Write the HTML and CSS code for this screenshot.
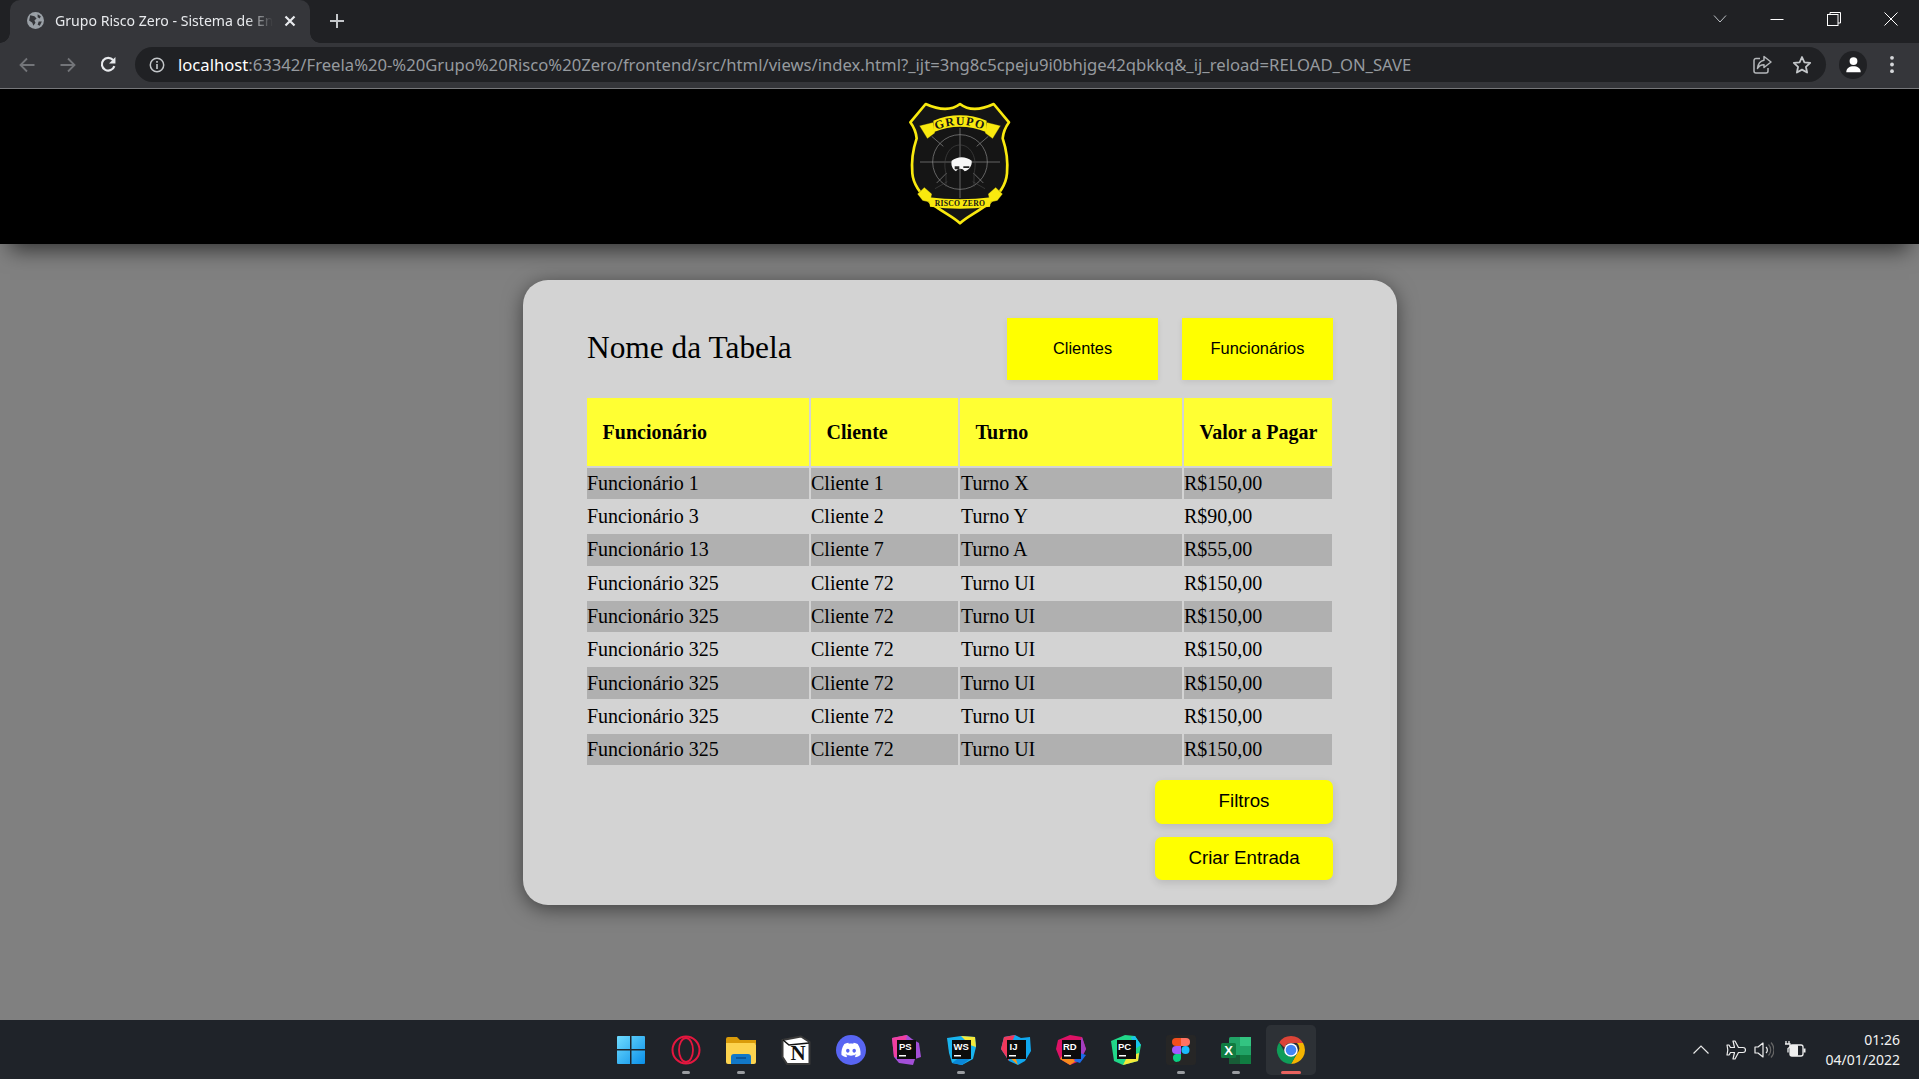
FILE: index.html
```html
<!DOCTYPE html>
<html lang="pt-BR">
<head>
<meta charset="utf-8">
<title>Grupo Risco Zero - Sistema de Entradas</title>
<link rel="stylesheet" href="styles.css">
</head>
<body>
<div class="tabstrip">
  <div class="tab">
    <svg class="favicon" viewBox="0 0 16 16"><circle cx="8" cy="8" r="8" fill="#9aa0a6"/><path d="M3 3l4 1 2 2-2 2 1 2-2 3-1-3-3-2zM10 2l3 2-1 2-2-1zM11 9l3 0-2 4-2-1z" fill="#35363a"/></svg>
    <span class="tab-title">Grupo Risco Zero - Sistema de En</span>
    <svg class="tab-close" viewBox="0 0 12 12"><path d="M1.500 1.500l9 9M10.500 1.500l-9 9" stroke="#e8eaed" stroke-width="2.200"/></svg>
  </div>
  <svg class="new-tab" viewBox="0 0 16 16"><path d="M8 1v14M1 8h14" stroke="#c4c7ca" stroke-width="2"/></svg>
  <div class="win-controls">
    <svg class="win-chevron" viewBox="0 0 14 10"><path d="M1 1.500l6 6.500 6-6.500" fill="none" stroke="#bdc1c6" stroke-width="1"/></svg>
    <svg class="win-btn" viewBox="0 0 14 14"><path d="M0.500 7.500h13" stroke="#fff" stroke-width="1"/></svg>
    <svg class="win-btn" viewBox="0 0 14 14"><rect x="0.500" y="2.500" width="10.500" height="11" fill="none" stroke="#fff"/><path d="M3 2.500V0.500h10.500v10.500H11" fill="none" stroke="#fff"/></svg>
    <svg class="win-btn win-close" viewBox="0 0 14 14"><path d="M0.500 0.500l13 13M13.500 0.500l-13 13" stroke="#fff" stroke-width="1"/></svg>
  </div>
</div>
<div class="toolbar">
  <svg class="nav-icon" viewBox="0 0 16 16"><path d="M15.500 8H1.500M8 1.500L1.500 8 8 14.500" fill="none" stroke="#737579" stroke-width="1.800"/></svg>
  <svg class="nav-icon" viewBox="0 0 16 16"><path d="M.5 8h14M8 1.500L14.500 8 8 14.500" fill="none" stroke="#737579" stroke-width="1.800"/></svg>
  <svg class="nav-icon nav-reload" viewBox="0 0 16 16"><path d="M13.500 9.500A6 6 0 1 1 12.300 3.800" fill="none" stroke="#e8eaed" stroke-width="2"/><path d="M14.500 1v6h-6z" fill="#e8eaed"/></svg>
  <div class="omnibox">
    <svg class="info-icon" viewBox="0 0 16 16"><circle cx="8" cy="8" r="6.700" fill="none" stroke="#c4c7ca" stroke-width="1.500"/><path d="M8 7v5M8 4v1.800" stroke="#c4c7ca" stroke-width="1.600"/></svg>
    <span class="url"><span class="url-host">localhost</span>:63342/Freela%20-%20Grupo%20Risco%20Zero/frontend/src/html/views/index.html?_ijt=3ng8c5cpeju9i0bhjge42qbkkq&amp;_ij_reload=RELOAD_ON_SAVE</span>
    <svg class="omni-icon" viewBox="0 0 20 20"><path d="M8 3.500H4a2 2 0 0 0-2 2v10.500a2 2 0 0 0 2 2h10a2 2 0 0 0 2-2v-3" fill="none" stroke="#b4b7ba" stroke-width="1.500"/><path d="M12 1.500l7 5.500-7 5.500V9.700c-3 0-5 1-6.500 3.800C6 9 8 5.800 12 5.200z" fill="none" stroke="#b4b7ba" stroke-width="1.500" stroke-linejoin="round"/></svg>
    <svg class="omni-icon" viewBox="0 0 20 20"><path d="M10 2l2.400 5.300 5.800.6-4.300 3.900 1.200 5.700L10 14.600l-5.100 2.900 1.200-5.700L1.800 7.900l5.800-.6z" fill="none" stroke="#c4c7ca" stroke-width="1.800" stroke-linejoin="round"/></svg>
  </div>
  <div class="profile"><svg class="profile-icon" viewBox="0 0 20 20"><circle cx="10" cy="6" r="4.600" fill="#fff"/><path d="M1.500 19c0-5 4-7 8.500-7s8.500 2 8.500 7z" fill="#fff"/></svg></div>
  <svg class="dots" viewBox="0 0 6 20"><circle cx="3" cy="3" r="2" fill="#d5d7da"/><circle cx="3" cy="10" r="2" fill="#d5d7da"/><circle cx="3" cy="17" r="2" fill="#d5d7da"/></svg>
</div>

<header class="site-header">
  <svg class="logo" viewBox="0 0 480 450">
    <path d="M240 42C222 56 190 66 137 42L91 97C102 112 108 125 110 145C98 180 94 215 97 250C100 288 125 316 155 341C190 368 220 381 240 400C260 381 290 368 325 341C355 316 378 288 381 250C384 215 380 180 368 145C370 125 376 112 387 97L341 42C290 66 258 56 240 42Z" fill="#151515" stroke="#f9e90e" stroke-width="8" stroke-linejoin="round"/>
    <g fill="none" stroke="#8d8d8d" stroke-width="2">
      <circle cx="240" cy="216" r="82"/>
      <path d="M240 114V324M120 216H360M155 139L190 169M325 139L290 169M170 279L200 249M310 279L280 249"/>
      <path d="M198 290V250C186 205 207 165 240 165C273 165 294 205 282 250V290M165 296L202 275M315 296L278 275" stroke="#454545"/>
    </g>
    <path d="M215 212C232 198 258 198 275 212C277 226 268 240 254 244C248 234 234 234 228 244C218 238 212 226 215 212Z" fill="#f6f6f6"/>
    <path d="M224 229h14v9h-14zM250 229h18v5h-18z" fill="#222"/>
    <path d="M118 107L160 97L165 129L142 146Z M362 107L320 97L315 129L338 146Z" fill="#f9e90e" stroke="#151515" stroke-width="1"/>
    <path d="M160 92Q240 60 320 92L318 126Q240 94 162 126Z" fill="#f9e90e"/>
    <path id="grupoCurve" d="M168 120Q240 90 312 120" fill="none"/>
    <text class="logo-top"><textPath href="#grupoCurve" startOffset="50%" text-anchor="middle">GRUPO</textPath></text>
    <path d="M112 312L133 292L156 312L150 337L128 332Z M368 312L347 292L324 312L330 337L352 332Z" fill="#f9e90e" stroke="#151515" stroke-width="1"/>
    <path d="M146 322Q240 334 334 322L330 350Q240 362 150 350Z" fill="#f9e90e"/>
    <text class="logo-bottom" x="240" y="349" text-anchor="middle">RISCO ZERO</text>
  </svg>
</header>

<main class="page">
  <section class="card">
    <div class="card-head">
      <h1 class="card-title">Nome da Tabela</h1>
      <div class="head-buttons">
        <button class="btn-square">Clientes</button>
        <button class="btn-square">Funcionários</button>
      </div>
    </div>
    <table class="data-table">
      <colgroup><col class="col-a"><col class="col-b"><col class="col-c"><col class="col-d"></colgroup>
      <thead><tr><th>Funcionário</th><th>Cliente</th><th>Turno</th><th>Valor a Pagar</th></tr></thead>
      <tbody>
        <tr><td>Funcionário 1</td><td>Cliente 1</td><td>Turno X</td><td>R$150,00</td></tr>
        <tr><td>Funcionário 3</td><td>Cliente 2</td><td>Turno Y</td><td>R$90,00</td></tr>
        <tr><td>Funcionário 13</td><td>Cliente 7</td><td>Turno A</td><td>R$55,00</td></tr>
        <tr><td>Funcionário 325</td><td>Cliente 72</td><td>Turno UI</td><td>R$150,00</td></tr>
        <tr><td>Funcionário 325</td><td>Cliente 72</td><td>Turno UI</td><td>R$150,00</td></tr>
        <tr><td>Funcionário 325</td><td>Cliente 72</td><td>Turno UI</td><td>R$150,00</td></tr>
        <tr><td>Funcionário 325</td><td>Cliente 72</td><td>Turno UI</td><td>R$150,00</td></tr>
        <tr><td>Funcionário 325</td><td>Cliente 72</td><td>Turno UI</td><td>R$150,00</td></tr>
        <tr><td>Funcionário 325</td><td>Cliente 72</td><td>Turno UI</td><td>R$150,00</td></tr>
      </tbody>
    </table>
    <div class="card-actions">
      <button class="btn-round">Filtros</button>
      <button class="btn-round btn-short">Criar Entrada</button>
    </div>
  </section>
</main>

<footer class="taskbar">
  <div class="task-apps">
    <div class="task-item">
      <svg class="task-icon" viewBox="0 0 30 30"><defs><linearGradient id="winBlue" x1="0" y1="0" x2="1" y2="1"><stop offset="0" stop-color="#6fdcff"/><stop offset="1" stop-color="#0a8fe8"/></linearGradient></defs><path d="M1 2a1 1 0 0 1 1-1h12v13H1zM15.500 1H28a1 1 0 0 1 1 1v12H15.500zM1 15.500h13V29H2a1 1 0 0 1-1-1zM15.500 15.500H29V28a1 1 0 0 1-1 1H15.500z" fill="url(#winBlue)"/></svg>
    </div>
    <div class="task-item running">
      <svg class="task-icon" viewBox="0 0 30 30"><circle cx="15" cy="15" r="13.500" fill="none" stroke="#e5173f" stroke-width="2"/><ellipse cx="15" cy="15" rx="7" ry="12" fill="none" stroke="#e5173f" stroke-width="1.800"/></svg>
    </div>
    <div class="task-item running">
      <svg class="task-icon" viewBox="0 0 30 30"><path d="M0 4a2 2 0 0 1 2-2h9l3 3H30v4H0z" fill="#d99b0a"/><path d="M0 8h28a2 2 0 0 1 2 2v17a2 2 0 0 1-2 2H2a2 2 0 0 1-2-2z" fill="#fcd34f"/><path d="M5 29v-7a3 3 0 0 1 3-3h14a3 3 0 0 1 3 3v7z" fill="#1278c8"/><path d="M10 23h10" stroke="#0b4d8c" stroke-width="1.500"/></svg>
    </div>
    <div class="task-item">
      <svg class="task-icon" viewBox="0 0 30 30"><path d="M1.500 5L20 1.500 28.500 7v22L6 29 1.500 22z" fill="#fff" stroke="#3a3a3a" stroke-width="2" stroke-linejoin="round"/><path d="M2 5l6 5 20-2" fill="none" stroke="#111" stroke-width="1.500"/><text class="notion-n" x="17" y="25" text-anchor="middle">N</text></svg>
    </div>
    <div class="task-item">
      <svg class="task-icon" viewBox="0 0 30 30"><circle cx="15" cy="15" r="15" fill="#5865f2"/><g transform="translate(5.400 5.400) scale(.8)"><path fill="#fff" d="M20.317 4.3698a19.7913 19.7913 0 00-4.8851-1.5152.0741.0741 0 00-.0785.0371c-.211.3753-.4447.8648-.6083 1.2495-1.8447-.2762-3.68-.2762-5.4868 0-.1636-.3933-.4058-.8742-.6177-1.2495a.077.077 0 00-.0785-.037 19.7363 19.7363 0 00-4.8852 1.515.0699.0699 0 00-.0321.0277C.5334 9.0458-.319 13.5799.0992 18.0578a.0824.0824 0 00.0312.0561c2.0528 1.5076 4.0413 2.4228 5.9929 3.0294a.0777.0777 0 00.0842-.0276c.4616-.6304.8731-1.2952 1.226-1.9942a.076.076 0 00-.0416-.1057c-.6528-.2476-1.2743-.5495-1.8722-.8923a.077.077 0 01-.0076-.1277c.1258-.0943.2517-.1923.3718-.2914a.0743.0743 0 01.0776-.0105c3.9278 1.7933 8.18 1.7933 12.0614 0a.0739.0739 0 01.0785.0095c.1202.099.246.1981.3728.2924a.077.077 0 01-.0066.1276 12.2986 12.2986 0 01-1.873.8914.0766.0766 0 00-.0407.1067c.3604.698.7719 1.3628 1.225 1.9932a.076.076 0 00.0842.0286c1.961-.6067 3.9495-1.5219 6.0023-3.0294a.077.077 0 00.0313-.0552c.5004-5.177-.8382-9.6739-3.5485-13.6604a.061.061 0 00-.0312-.0286zM8.02 15.3312c-1.1825 0-2.1569-1.0857-2.1569-2.419 0-1.3332.9555-2.4189 2.157-2.4189 1.2108 0 2.1757 1.0952 2.1568 2.419 0 1.3332-.9555 2.4189-2.1569 2.4189zm7.9748 0c-1.1825 0-2.1569-1.0857-2.1569-2.419 0-1.3332.9554-2.4189 2.1569-2.4189 1.2108 0 2.1757 1.0952 2.1568 2.419 0 1.3332-.946 2.4189-2.1568 2.4189Z"/></g></svg>
    </div>
    <div class="task-item">
      <svg class="task-icon" viewBox="0 0 30 30"><path d="M1 3L16 0 21 4 28 8 30 22 24 24 22 30 8 28 3 22z" fill="#a34fd8"/><path d="M1 3L16 0 12 22 3 22z" fill="#ef3fa0"/><rect x="6" y="5" width="19" height="19" fill="#0c0c0c"/><text class="jb-text" x="8" y="15">PS</text><rect x="8" y="20" width="7" height="1.500" fill="#fff"/></svg>
    </div>
    <div class="task-item running">
      <svg class="task-icon" viewBox="0 0 30 30"><path d="M1 3L15 1 29 2 30 12 27 24 16 30 6 28 3 18z" fill="#19b4ee"/><path d="M15 1L29 2 30 12 24 10z" fill="#f5e93a"/><path d="M24 24L16 30 6 28 14 22z" fill="#0a87d8"/><rect x="6" y="5" width="19" height="19" fill="#0c0c0c"/><text class="jb-text" x="7.500" y="15">WS</text><rect x="8" y="20" width="7" height="1.500" fill="#fff"/></svg>
    </div>
    <div class="task-item">
      <svg class="task-icon" viewBox="0 0 30 30"><path d="M3 2L14 0 20 3 29 2 30 16 24 26 17 30 8 26 0 14z" fill="#10a7ee"/><path d="M3 2L14 0 8 14 8 26 0 14z" fill="#f0385c"/><path d="M8 22L17 30 12 16z" fill="#f79a1c"/><rect x="6" y="5" width="19" height="19" fill="#0c0c0c"/><text class="jb-text" x="8.500" y="15">IJ</text><rect x="8" y="20" width="7" height="1.500" fill="#fff"/></svg>
    </div>
    <div class="task-item">
      <svg class="task-icon" viewBox="0 0 30 30"><path d="M2 5L14 0 26 2 30 14 24 26 14 30 4 24 0 14z" fill="#dd1265"/><path d="M26 2L30 14 24 26 16 24z" fill="#a23fc0"/><path d="M4 24L14 30 20 26 8 18z" fill="#f78b1c"/><path d="M18 26L24 28 30 20 24 18z" fill="#1b6be8"/><rect x="6" y="5" width="19" height="19" fill="#0c0c0c"/><text class="jb-text" x="7" y="15">RD</text><rect x="8" y="20" width="7" height="1.500" fill="#fff"/></svg>
    </div>
    <div class="task-item">
      <svg class="task-icon" viewBox="0 0 30 30"><path d="M0 6L14 0 24 1 30 10 27 26 12 30 3 26z" fill="#21d789"/><path d="M24 1L30 10 24 14 20 2z" fill="#19c4ee"/><path d="M12 30L27 26 28 18 16 22z" fill="#f5e93a"/><rect x="6" y="5" width="19" height="19" fill="#0c0c0c"/><text class="jb-text" x="7" y="15">PC</text><rect x="8" y="20" width="7" height="1.500" fill="#fff"/></svg>
    </div>
    <div class="task-item running">
      <svg class="task-icon" viewBox="0 0 30 30"><rect width="30" height="30" rx="3" fill="#262626"/><path d="M15 3h-5a4 4 0 0 0 0 8h5z" fill="#f24e1e"/><path d="M15 3h5a4 4 0 0 1 0 8h-5z" fill="#ff7262"/><path d="M15 11h-5a4 4 0 0 0 0 8h5z" fill="#a259ff"/><circle cx="19.500" cy="15" r="4" fill="#1abcfe"/><path d="M10 19h5v4a4 4 0 1 1-5-4z" fill="#0acf83"/></svg>
    </div>
    <div class="task-item running">
      <svg class="task-icon" viewBox="0 0 30 30"><rect x="8" y="2" width="22" height="27" rx="1.500" fill="#21a366"/><rect x="19" y="2" width="11" height="9" fill="#33c481"/><rect x="19" y="11" width="11" height="9" fill="#21a366"/><rect x="19" y="20" width="11" height="9" fill="#107c41"/><rect x="8" y="20" width="11" height="9" fill="#185c37"/><rect y="8" width="15" height="15" rx="1.500" fill="#107c41"/><text class="excel-x" x="7.500" y="20" text-anchor="middle">X</text></svg>
    </div>
    <div class="task-item active">
      <svg class="task-icon" viewBox="0 0 30 30"><path d="M15 1a14 14 0 0 1 12.100 7H15a7 7 0 0 0-6.500 4.400L3.200 7.400A14 14 0 0 1 15 1z" fill="#db4437"/><path d="M27.100 8A14 14 0 0 1 15 29l6-10.500A7 7 0 0 0 21 8z" fill="#f4b400"/><path d="M15 29A14 14 0 0 1 3.200 7.400L9 17.800A7 7 0 0 0 21 18.500z" fill="#0f9d58"/><circle cx="15" cy="15" r="6.800" fill="#fff"/><circle cx="15" cy="15" r="5.300" fill="#4285f4"/></svg>
    </div>
  </div>
  <div class="tray">
    <svg class="tray-chevron" viewBox="0 0 16 9"><path d="M.5 8.500L8 1l7.500 7.500" fill="none" stroke="#e8e8e8" stroke-width="1.200"/></svg>
    <svg class="tray-icon tray-air" viewBox="0 0 20 20"><path d="M7 1h2l3.500 6.500H17c2 0 2.500 1 2.500 2.500s-.5 2.500-2.500 2.500h-4.500L9 19H7l1.500-6.500H4.500L3 15H1l.8-5L1 5h2l1.500 2.500h4z" fill="none" stroke="#efefef" stroke-width="1.200" stroke-linejoin="round"/></svg>
    <svg class="tray-icon tray-vol" viewBox="0 0 20 20"><path d="M1 7h3l5-4v14l-5-4H1z" fill="none" stroke="#efefef" stroke-width="1.200" stroke-linejoin="round"/><path d="M12 7a4 4 0 0 1 0 6" fill="none" stroke="#efefef" stroke-width="1.200"/><path d="M14.500 4.500a8 8 0 0 1 0 11M17 2.500a11 11 0 0 1 0 15" fill="none" stroke="#666" stroke-width="1.200"/></svg>
    <svg class="tray-icon tray-battery" viewBox="0 0 22 20"><rect x="6" y="5" width="13" height="11" rx="2" fill="none" stroke="#efefef" stroke-width="1.300"/><rect x="6" y="5" width="8" height="11" rx="1" fill="#efefef"/><rect x="19.500" y="8.500" width="2" height="4" fill="#efefef"/><path d="M2 1v3M5 1v3M1 4h5v3l-2 1.500v4" fill="none" stroke="#efefef" stroke-width="1.300"/></svg>
    <div class="clock"><span>01:26</span><span>04/01/2022</span></div>
  </div>
</footer>
</body>
</html>
```

FILE: styles.css
```css
* { box-sizing: border-box; }

html, body { height: 100%; }

body {
  margin: 0;
  display: flex;
  flex-direction: column;
  height: 1079px;
  overflow: hidden;
  background: #808080;
  font-family: "Liberation Serif", serif;
  color: #000;
}

/* browser chrome */
.tabstrip {
  flex: 0 0 43px;
  display: flex;
  align-items: center;
  background: #202124;
  padding: 0 0 0 10px;
}

.tab {
  width: 300px;
  height: 43px;
  display: flex;
  align-items: center;
  padding: 0 14px 2px 16.500px;
  background: #35363a;
  border-radius: 10px 10px 0 0;
  position: relative;
}

.tab::before,
.tab::after {
  content: "";
  position: absolute;
  bottom: 0;
  width: 10px;
  height: 10px;
}

.tab::before {
  left: -10px;
  background: radial-gradient(circle at 0 0, #202124 9.500px, #35363a 10px);
}

.tab::after {
  right: -10px;
  background: radial-gradient(circle at 100% 0, #202124 9.500px, #35363a 10px);
}

.favicon { width: 17px; height: 17px; flex: none; }

.tab-title {
  margin-left: 11.500px;
  font: 14.100px "Noto Sans", sans-serif;
  color: #e8eaed;
  white-space: nowrap;
  -webkit-mask-image: linear-gradient(to left, transparent 0, #000 26px);
  mask-image: linear-gradient(to left, transparent 0, #000 26px);
}

.tab-close { width: 12px; height: 12px; margin-left: auto; flex: none; }

.new-tab { width: 16px; height: 16px; margin: 0 0 2px 19px; }

.win-controls {
  margin-left: auto;
  display: flex;
  align-items: center;
  padding: 0 21px 6px 0;
}

.win-chevron { width: 14px; height: 10px; margin-right: 43px; }

.win-btn { width: 14px; height: 14px; }

.win-btn + .win-btn { margin-left: 43px; }

.toolbar {
  flex: 0 0 46px;
  display: flex;
  align-items: center;
  background: #35363a;
  border-bottom: 1px solid #77787b;
  padding: 0 0 2px 19px;
}

.nav-icon { width: 16px; height: 16px; margin-right: 24.500px; flex: none; }

.nav-reload { width: 17px; height: 17px; margin-right: 23.500px; }

.omnibox {
  width: 1691px;
  height: 35px;
  margin-left: -5.500px;
  display: flex;
  align-items: center;
  background: #202124;
  border-radius: 18px;
  padding: 0 14px 0 14px;
  flex: none;
}

.info-icon { width: 16px; height: 16px; flex: none; }

.url {
  flex: 1;
  margin-left: 13px;
  font: 16.650px "Noto Sans", sans-serif;
  color: #969a9f;
  white-space: nowrap;
}

.url-host { color: #fff; }

.omni-icon { width: 20px; height: 20px; flex: none; margin-left: 20px; }

.profile {
  width: 28px;
  height: 28px;
  margin-left: 13px;
  display: flex;
  align-items: center;
  justify-content: center;
  background: #202124;
  border-radius: 50%;
  flex: none;
}

.profile-icon { width: 17px; height: 17px; }

.dots { width: 6px; height: 19px; margin-left: 22px; flex: none; }

/* site header */
.site-header {
  flex: 0 0 155px;
  display: flex;
  justify-content: center;
  padding-top: 1px;
  background: #000;
  box-shadow: 0 16px 20px -10px rgba(0, 0, 0, 0.6);
  position: relative;
}

.logo { width: 160px; height: 150px; }

.logo-top {
  font: bold 36px "Liberation Serif", serif;
  letter-spacing: 3.500px;
  fill: #151515;
}

.logo-bottom {
  font: bold 23px "Liberation Serif", serif;
  letter-spacing: 0.800px;
  fill: #151515;
}

/* page */
.page {
  flex: 1;
  padding: 36px 0 0 1px;
  min-height: 0;
}

.card {
  width: 874px;
  height: 625px;
  margin: 0 auto;
  padding: 38px 62px 0;
  background: #d3d3d3;
  border-radius: 25px;
  box-shadow: 0 4px 20px rgba(0, 0, 0, 0.5);
}

.card-head {
  height: 62px;
  display: flex;
  align-items: center;
  justify-content: space-between;
  padding: 0 2.300px 0 2px;
}

.card-title {
  margin: 0;
  padding-bottom: 2px;
  font-size: 31.400px;
  font-weight: 400;
}

.head-buttons { display: flex; gap: 24.600px; }

.btn-square,
.btn-round {
  border: 0;
  background: #ff0;
  color: #000;
  font-family: "Liberation Sans", sans-serif;
  padding: 0 0 2px;
}

.btn-square {
  width: 150.400px;
  height: 62px;
  font-size: 16.400px;
  box-shadow: 0 2px 6px rgba(0, 0, 0, 0.08);
}

.data-table {
  width: 749px;
  margin-top: 15.700px;
  table-layout: fixed;
  border-collapse: separate;
  border-spacing: 2px;
  font-size: 20px;
}

.col-a { width: 222px; }
.col-b { width: 147px; }
.col-c { width: 222px; }
.col-d { width: 148px; }

.data-table th {
  height: 68px;
  padding: 1px 0 0 15.600px;
  text-align: left;
  background: #ff3;
  font-size: 20px;
  font-weight: 700;
  white-space: nowrap;
}

.data-table td {
  height: 31.300px;
  padding: 0;
  white-space: nowrap;
}

.data-table td:nth-child(3) { padding-left: 1px; }

.data-table tbody tr:nth-child(odd) td { background: #b0b0b0; }

.card-actions {
  display: flex;
  flex-direction: column;
  align-items: flex-end;
  gap: 13px;
  margin-top: 13px;
  padding-right: 2.300px;
}

.btn-round {
  width: 177.400px;
  height: 44px;
  border-radius: 7px;
  font-size: 18.700px;
  box-shadow: 0 3px 8px rgba(0, 0, 0, 0.12);
}

.btn-short { height: 43px; }

/* taskbar */
.taskbar {
  flex: 0 0 59px;
  position: relative;
  display: flex;
  align-items: center;
  justify-content: center;
  background: #1f2329;
}

.task-apps { display: flex; gap: 5px; padding-left: 2px; }

.task-item {
  width: 50px;
  height: 50px;
  display: flex;
  align-items: center;
  justify-content: center;
  position: relative;
  border-radius: 5px;
}

.task-icon { width: 30px; height: 30px; }

.running::after,
.active::after {
  content: "";
  position: absolute;
  bottom: 1px;
  left: 50%;
  width: 8px;
  height: 3px;
  margin-left: -4px;
  border-radius: 2px;
  background: #9a9da1;
}

.active { background: #2d3136; }

.active::after {
  width: 20px;
  margin-left: -10px;
  background: #e8635f;
}

.jb-text {
  font: bold 9.500px "Liberation Sans", sans-serif;
  fill: #fff;
}

.notion-n {
  font: bold 21px "Liberation Serif", serif;
  fill: #111;
}

.excel-x {
  font: bold 13px "Liberation Sans", sans-serif;
  fill: #fff;
}

.tray {
  position: absolute;
  right: 19px;
  top: 0;
  bottom: 0;
  display: flex;
  align-items: center;
}

.tray-chevron { width: 16px; height: 9px; margin-right: 17px; }

.tray-icon { width: 20px; height: 20px; }

.tray-air { margin-right: 8px; }

.tray-vol { margin-right: 10px; }

.tray-battery { width: 22px; margin-right: 20px; }

.clock {
  display: flex;
  flex-direction: column;
  align-items: flex-end;
  gap: 3px;
  font: 14px/17px "Noto Sans", sans-serif;
  color: #f2f2f2;
}
```
